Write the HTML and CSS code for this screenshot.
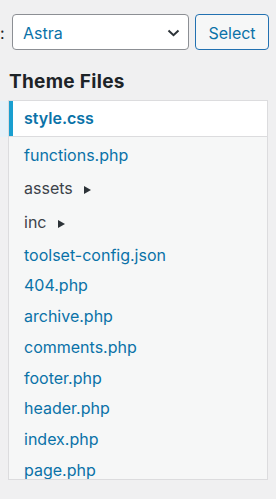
FILE: index.html
```html
<!DOCTYPE html>
<html>
<head>
  <link rel="stylesheet" href="styles.css">
</head>
<body>
  <form class="theme-pick">
    <label class="label-tail" for="theme">:</label>
    <div class="select-box">
      <span id="theme">Astra</span>
      <svg class="chevron" width="13" height="8" viewBox="0 0 13 8"><path d="M1.5 1.5 L6.5 6.2 L11.5 1.5" fill="none" stroke="#2c3338" stroke-width="2"/></svg>
    </div>
    <button type="button" class="button">Select</button>
  </form>

  <h2 class="files-title">Theme Files</h2>

  <div class="gutter-tint"></div>
  <div class="file-box">
    <ul class="file-list">
      <li class="current"><a href="#">style.css</a></li>
      <li class="first"><a href="#">functions.php</a></li>
      <li class="folder">assets <span class="arrow"></span></li>
      <li class="folder">inc <span class="arrow"></span></li>
      <li><a href="#">toolset-config.json</a></li>
      <li><a href="#">404.php</a></li>
      <li><a href="#">archive.php</a></li>
      <li><a href="#">comments.php</a></li>
      <li><a href="#">footer.php</a></li>
      <li><a href="#">header.php</a></li>
      <li><a href="#">index.php</a></li>
      <li><a href="#">page.php</a></li>
    </ul>
  </div>
</body>
</html>
```

FILE: styles.css
```css
body {
  margin: 0;
  background: #f0f0f1;
  font-family: Inter, "Liberation Sans", Arial, sans-serif;
  font-size: 16px;
  color: #1d2327;
}

.theme-pick {
  display: flex;
  align-items: center;
  margin: 14px 0 0 0;
  height: 36px;
}

.label-tail {
  width: 6px;
  padding-top: 2px;
}

.select-box {
  box-sizing: border-box;
  margin-left: 6px;
  width: 177px;
  height: 36px;
  border: 1px solid #8c8f94;
  border-radius: 4px;
  background: #fff;
  display: flex;
  align-items: center;
  justify-content: space-between;
  padding: 2px 8px 0 10px;
  color: #0a72a8;
}

.button {
  box-sizing: border-box;
  margin-left: 6px;
  width: 74px;
  height: 36px;
  border: 1px solid #2271b1;
  border-radius: 4px;
  background: #f6f7f7;
  color: #0a72a8;
  font-family: inherit;
  font-size: 16px;
  padding: 2px 0 0 0;
}

.files-title {
  margin: 20px 0 0 9px;
  font-size: 19px;
  line-height: 24px;
  letter-spacing: 0.3px;
  font-weight: bold;
}

.file-box {
  box-sizing: border-box;
  margin: 6px 0 0 8px;
  width: 260px;
  height: 380px;
  border: 1px solid #dcdcde;
  background: #f6f7f7;
}

.file-list {
  list-style: none;
  margin: 0;
  padding: 0;
  height: 378px;
  overflow: hidden;
}

.file-list li {
  padding-left: 15px;
  line-height: 30.7px;
  color: #3c434a;
}

.file-list a {
  color: #0a72a8;
  text-decoration: none;
}

.file-list .current {
  line-height: 35px;
  background: #fff;
  border-bottom: 1px solid #dcdcde;
  box-shadow: inset 4px 0 0 #1a9fd0;
}

.file-list .current a {
  font-weight: 600;
}

.file-list .first {
  margin-top: 3px;
}

.file-list .folder {
  line-height: 34.5px;
}

.arrow {
  display: inline-block;
  margin-left: 7px;
  width: 0;
  height: 0;
  border-left: 7px solid #2c3338;
  border-top: 4.5px solid transparent;
  border-bottom: 4.5px solid transparent;
}

/* pale highlight spilling into the left gutter beside the current file */
.gutter-tint {
  position: absolute;
  left: 0;
  top: 101px;
  width: 8px;
  height: 36px;
  background: #e6f1f8;
}
```
